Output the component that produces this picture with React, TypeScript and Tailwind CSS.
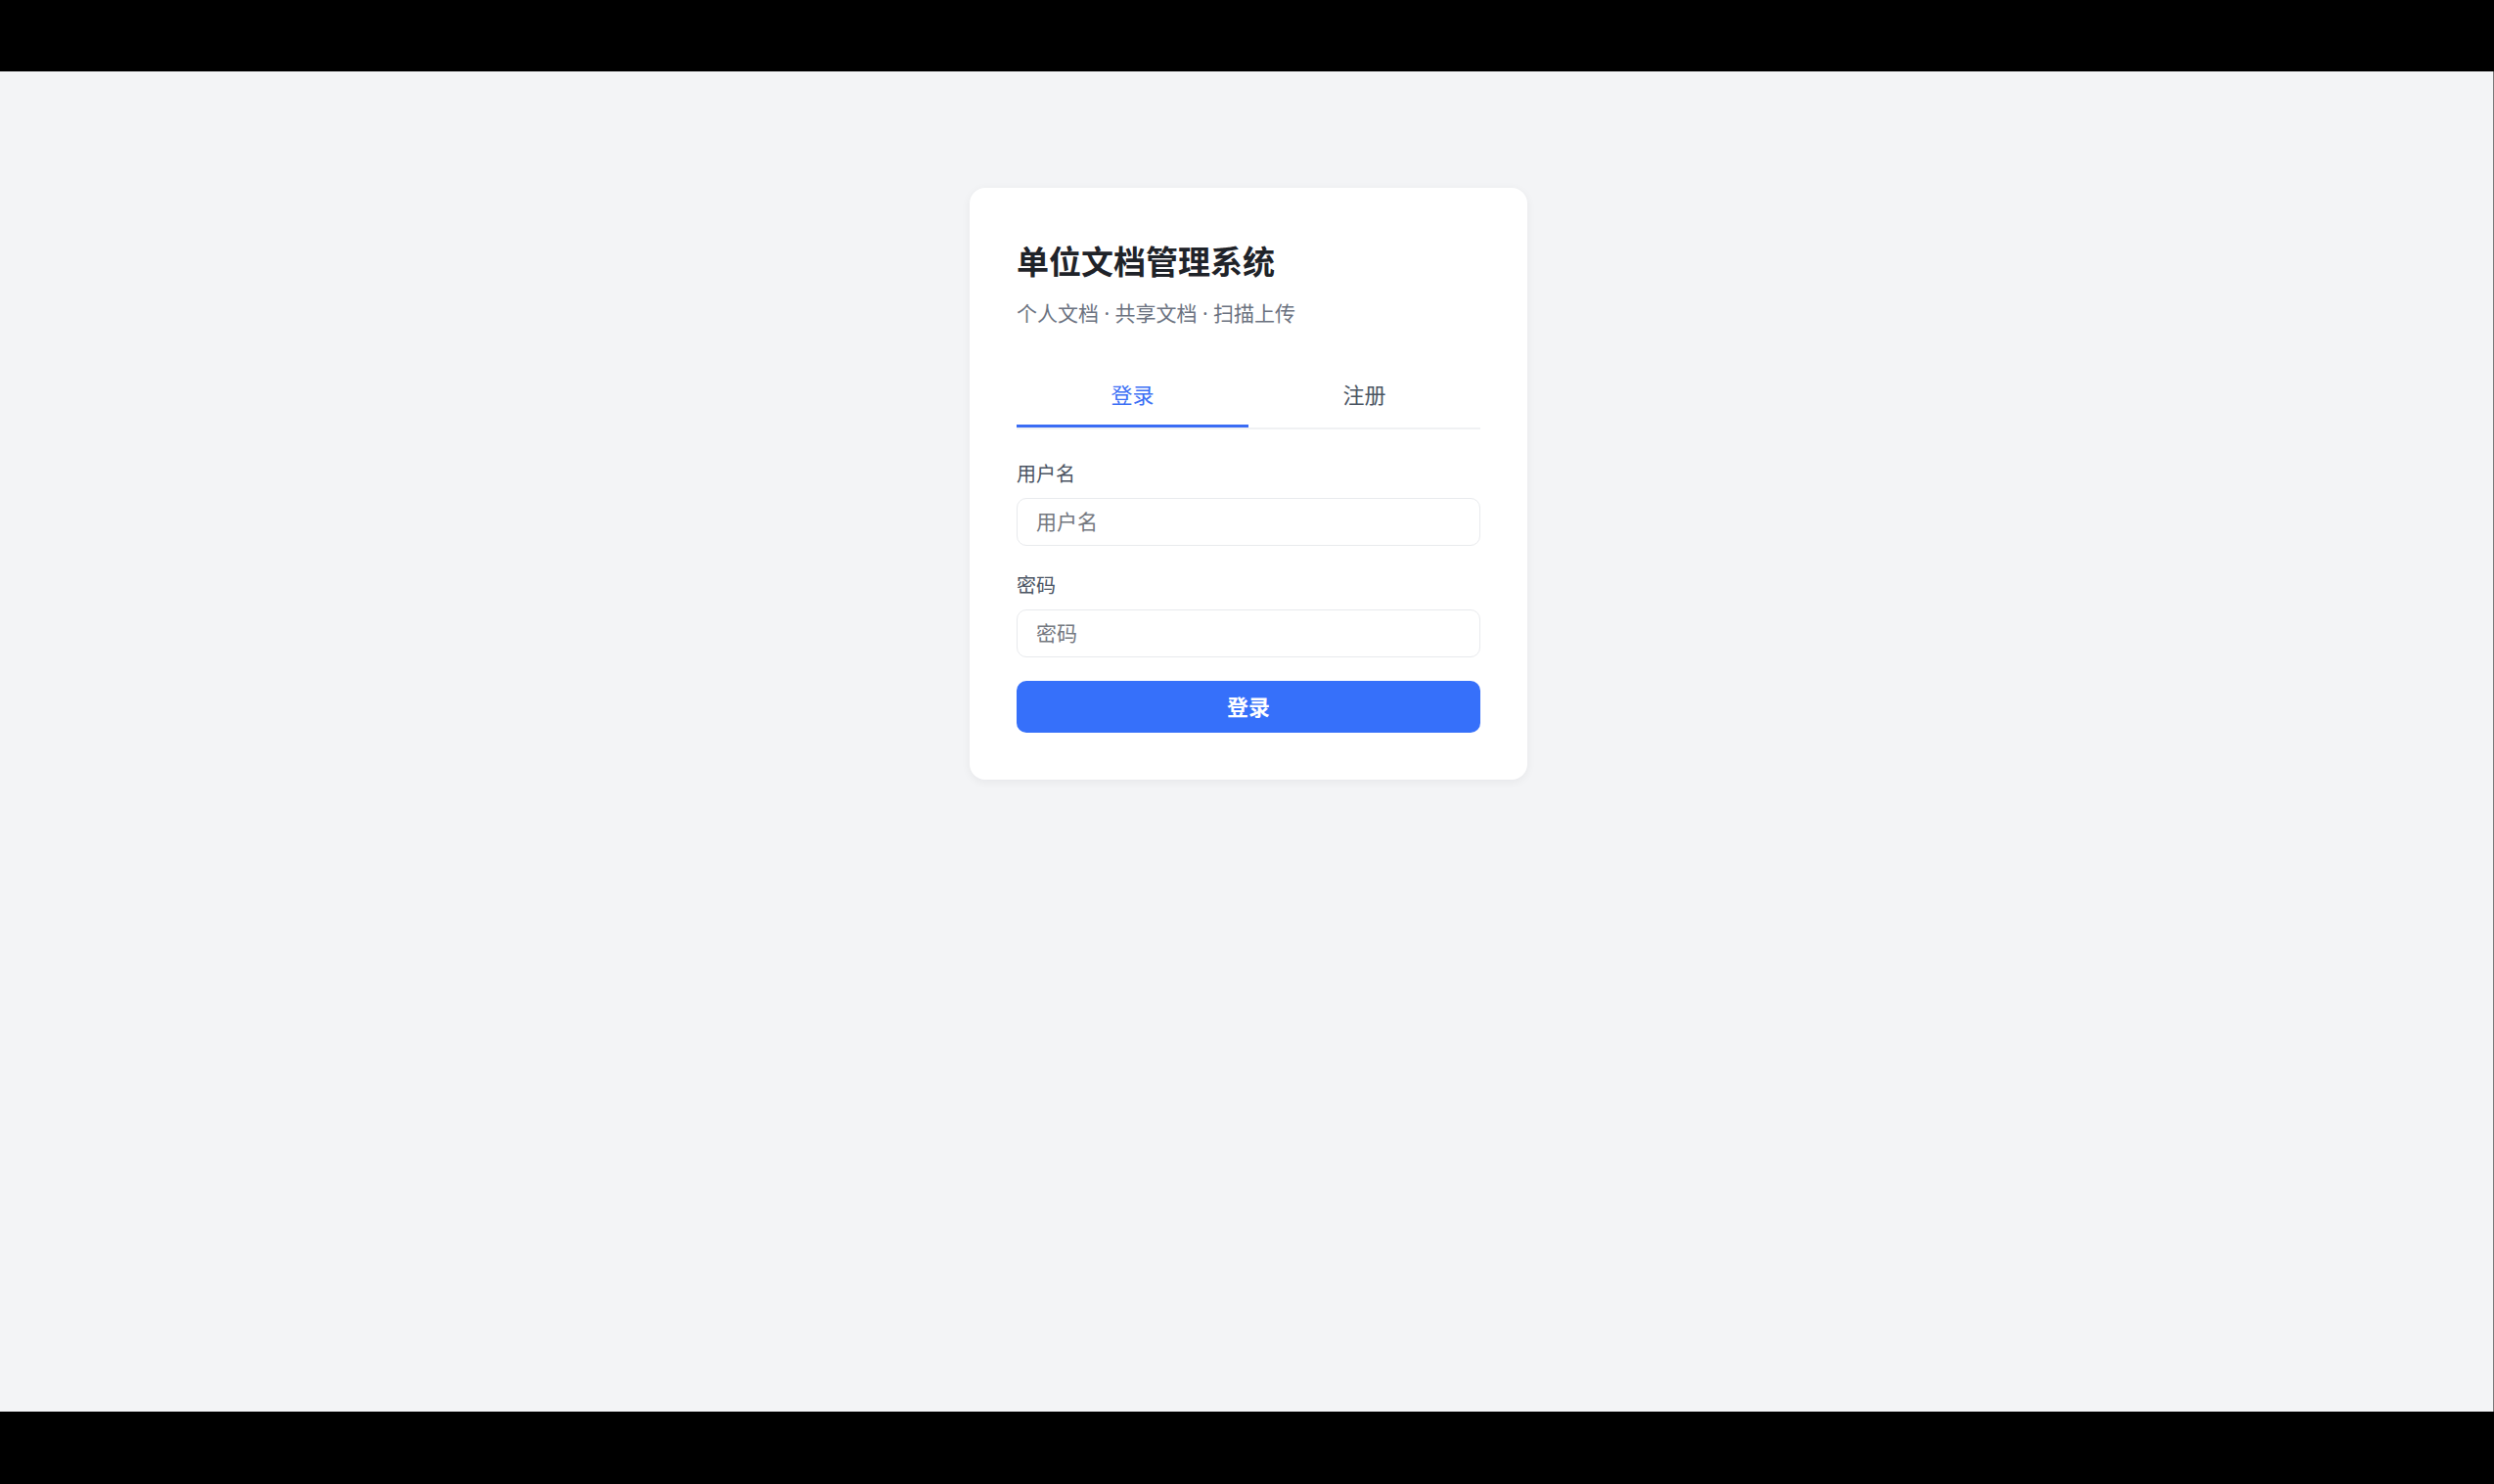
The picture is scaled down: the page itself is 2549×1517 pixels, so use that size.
import React, { useState } from "react";

const FONT = '"Noto Sans", "Noto Sans CJK SC", "Liberation Sans", sans-serif';

export default function App() {
  const [tab, setTab] = useState<"login" | "register">("login");
  return (
    <div className="w-[2549px] h-[1517px] bg-black flex flex-col" style={{ fontFamily: FONT }}>
      <div className="h-[73px] shrink-0" />
      <div className="h-[1370px] shrink-0 bg-[#f3f4f6] border-r border-[#7a7a7a] flex justify-center items-start pt-[119px] pl-[4px]">
        <div className="w-[570px] rounded-[16px] bg-white shadow-[0_2px_10px_rgba(15,23,42,0.06)] pt-[56px] px-[48px] pb-[48px]">
          <h1 className="text-[33px] font-bold leading-[40px] text-[#1f2329]">单位文档管理系统</h1>
          <p className="mt-[18px] text-[21px] leading-[28px] text-[#6b7280]">个人文档 · 共享文档 · 扫描上传</p>

          <div className="mt-[36px] flex border-b-2 border-[#f0f1f3]">
            <button
              onClick={() => setTab("login")}
              className={`relative flex-1 h-[67px] pb-[1px] flex items-center justify-center text-[22px] ${
                tab === "login" ? "text-[#3d70f5]" : "text-[#4b5563]"
              }`}
            >
              登录
              {tab === "login" && <span className="absolute left-0 right-0 bottom-0 h-[3px] bg-[#3a6cf4]" />}
            </button>
            <button
              onClick={() => setTab("register")}
              className={`relative flex-1 h-[67px] pb-[1px] flex items-center justify-center text-[22px] ${
                tab === "register" ? "text-[#3d70f5]" : "text-[#4b5563]"
              }`}
            >
              注册
              {tab === "register" && <span className="absolute left-0 right-0 bottom-0 h-[3px] bg-[#3a6cf4]" />}
            </button>
          </div>

          <label className="block mt-[33px] text-[20px] leading-[26px] text-[#4b5563]">用户名</label>
          <input
            className="block w-full mt-[11px] h-[49px] rounded-[10px] border-[1.5px] border-[#e8eaed] px-[19px] pb-[2px] text-[21px] text-[#1f2329] placeholder:text-[#74787f] outline-none"
            placeholder="用户名"
          />

          <label className="block mt-[28px] text-[20px] leading-[26px] text-[#4b5563]">密码</label>
          <input
            type="password"
            className="block w-full mt-[11px] h-[49px] rounded-[10px] border-[1.5px] border-[#e8eaed] px-[19px] pb-[2px] text-[21px] text-[#1f2329] placeholder:text-[#74787f] outline-none"
            placeholder="密码"
          />

          <button className="mt-[24px] w-full h-[53px] pb-[1px] rounded-[10px] bg-[#3670fa] text-white text-[22px] font-bold flex items-center justify-center">
            登录
          </button>
        </div>
      </div>
      <div className="flex-1" />
    </div>
  );
}
